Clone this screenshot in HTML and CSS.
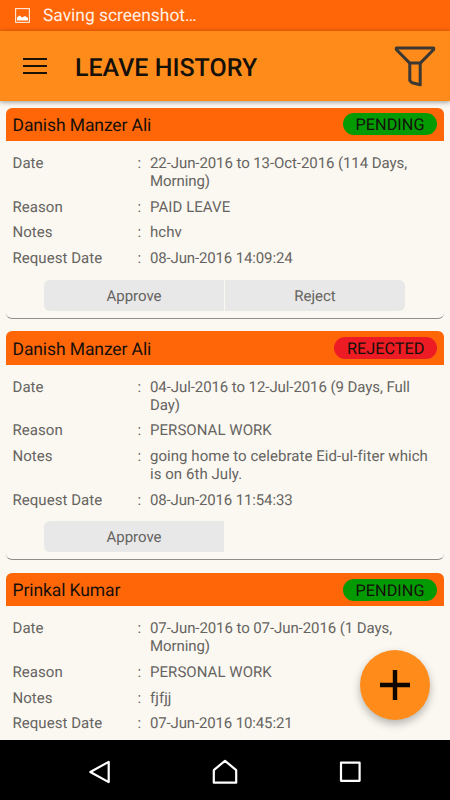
FILE: index.html
```html
<!DOCTYPE html>
<html lang="en">
<head>
    <meta charset="UTF-8">
    <meta name="viewport" content="width=device-width, initial-scale=1.0">
    <title>Leave History</title>
    <link rel="stylesheet" href="styles.css">
</head>
<body>
    <div class="status-bar">
        <svg class="status-icon" width="15" height="15" viewBox="0 0 15 15">
            <rect x="0.6" y="0.6" width="13.8" height="13.8" fill="none" stroke="#ffe9dc" stroke-width="1.1"/>
            <path d="M2 12.5V9.5L4.6 7.6L7 9.6L10 8L13 10V12.5Z" fill="#fff"/>
        </svg>
        <span>Saving screenshot…</span>
    </div>

    <header class="toolbar">
        <svg class="menu-icon" width="24" height="18" viewBox="0 0 24 18">
            <path d="M0 2H24M0 9H24M0 16H24" stroke="#1b1206" stroke-width="2"/>
        </svg>
        <h1>LEAVE HISTORY</h1>
        <svg class="filter-icon" width="42" height="42" viewBox="0 0 42 42" fill="none" stroke="#3b3733" stroke-width="3" stroke-linejoin="round">
            <path d="M2.3 2.9H39.7V4.5L26.5 17.9H15.5L2.3 4.5Z"/>
            <path d="M15.8 17.9V35.5L18 37.8L26.2 39.8V17.9"/>
        </svg>
    </header>

    <main class="list">
        <section class="card">
            <div class="card-head">
                <h2>Danish Manzer Ali</h2>
                <span class="badge pending">PENDING</span>
            </div>
            <dl class="details">
                <dt>Date</dt><dd class="period">22-Jun-2016 to 13-Oct-2016 (114 Days,<br>Morning)</dd>
                <dt>Reason</dt><dd>PAID LEAVE</dd>
                <dt>Notes</dt><dd>hchv</dd>
                <dt>Request Date</dt><dd class="timestamp">08-Jun-2016 14:09:24</dd>
            </dl>
            <div class="actions">
                <button class="btn approve">Approve</button>
                <button class="btn reject">Reject</button>
            </div>
        </section>

        <section class="card">
            <div class="card-head">
                <h2>Danish Manzer Ali</h2>
                <span class="badge rejected">REJECTED</span>
            </div>
            <dl class="details">
                <dt>Date</dt><dd class="period">04-Jul-2016 to 12-Jul-2016 (9 Days, Full<br>Day)</dd>
                <dt>Reason</dt><dd>PERSONAL WORK</dd>
                <dt>Notes</dt><dd>going home to celebrate Eid-ul-fiter which<br>is on 6th July.</dd>
                <dt>Request Date</dt><dd class="timestamp">08-Jun-2016 11:54:33</dd>
            </dl>
            <div class="actions">
                <button class="btn approve">Approve</button>
            </div>
        </section>

        <section class="card">
            <div class="card-head">
                <h2>Prinkal Kumar</h2>
                <span class="badge pending">PENDING</span>
            </div>
            <dl class="details">
                <dt>Date</dt><dd class="period">07-Jun-2016 to 07-Jun-2016 (1 Days,<br>Morning)</dd>
                <dt>Reason</dt><dd>PERSONAL WORK</dd>
                <dt>Notes</dt><dd>fjfjj</dd>
                <dt>Request Date</dt><dd class="timestamp">07-Jun-2016 10:45:21</dd>
            </dl>
        </section>
    </main>

    <!-- Floating add button -->
    <button class="fab" aria-label="Add leave">
        <svg width="30" height="30" viewBox="0 0 30 30">
            <path d="M15 0V30M0 15H30" stroke="#0d0700" stroke-width="4.4"/>
        </svg>
    </button>

    <nav class="nav-bar">
        <svg width="26" height="26" viewBox="0 0 26 26">
            <path d="M21.7 2.9V23.1L3.3 13Z"/>
        </svg>
        <svg width="26" height="26" viewBox="0 0 26 26">
            <path d="M1.8 23.7V11.1L13 1.8L24.2 11.1V23.7Z"/>
        </svg>
        <svg width="26" height="26" viewBox="0 0 26 26">
            <rect x="4" y="3.6" width="18.6" height="18.2"/>
        </svg>
    </nav>
</body>
</html>
```

FILE: styles.css
```css
* {
    box-sizing: border-box;
}
body {
    font-family: Roboto, "Liberation Sans", sans-serif;
    text-rendering: geometricPrecision;
    margin: 0;
    height: 800px;
    display: flex;
    flex-direction: column;
    position: relative;
    overflow: hidden;
    background: #fbf8f1;
    color: #666461;
}
.status-bar {
    flex: none;
    height: 31px;
    padding-left: 15px;
    display: flex;
    align-items: center;
    gap: 13px;
    background: #ff6608;
    color: #fff0e6;
    font-size: 17.4px;
    line-height: 28px;
}
.toolbar {
    flex: none;
    height: 70px;
    padding: 0 14px 0 23px;
    display: flex;
    align-items: center;
    background: #ff8c1a;
    box-shadow: 0 1px 5px rgba(0, 0, 0, 0.4);
    z-index: 1;
}
.toolbar h1 {
    margin: 6px 0 0 28px;
    font-size: 25px;
    font-weight: 500;
    line-height: 28px;
    color: #15100a;
}
.filter-icon {
    margin-left: auto;
}
.list {
    flex: 1;
    min-height: 0;
    overflow: hidden;
    padding: 6.6px 6px 0;
}
.card {
    margin-bottom: 12.8px;
    border-bottom: 1.5px solid #8f8d89;
    border-radius: 6px;
}
.card:last-child {
    padding-bottom: 50px;
}
.card-head {
    height: 33.5px;
    padding: 0 7px 0 6.5px;
    display: flex;
    align-items: center;
    justify-content: space-between;
    background: #ff6608;
    border-radius: 6px 6px 0 0;
    color: #15100a;
}
.card-head h2 {
    margin: 4px 0 0;
    font-size: 17.5px;
    font-weight: 400;
    line-height: 21px;
    letter-spacing: -0.1px;
}
.badge {
    height: 22px;
    padding: 0 12.5px;
    border-radius: 11px;
    font-size: 16.3px;
    line-height: 23px;
}
.pending {
    background: #049a04;
}
.rejected {
    background: #ed1c24;
}
.details {
    margin: 0;
    padding: 14.1px 0 0 6.5px;
    display: grid;
    grid-template-columns: 125px 1fr;
    row-gap: 8.2px;
    font-size: 15px;
    line-height: 17.6px;
    letter-spacing: 0.05px;
}
.details dd {
    margin: 0;
    display: block;
    position: relative;
    padding-left: 12.5px;
    white-space: nowrap;
}
/* colon column between label and value */
.details dd::before {
    content: ":";
    position: absolute;
    left: 0;
}
.details .period {
    letter-spacing: -0.08px;
}
.details .timestamp {
    letter-spacing: -0.14px;
}
.actions {
    display: flex;
    gap: 1px;
    padding: 12.2px 38px 6.5px;
}
.btn {
    width: 180px;
    height: 31.2px;
    padding: 1px 0 0;
    border: none;
    background: #e8e8e8;
    color: #666461;
    font-family: inherit;
    font-size: 15px;
    text-rendering: inherit;
}
.approve {
    border-radius: 6px 0 0 6px;
}
.reject {
    border-radius: 0 6px 6px 0;
}
.fab {
    position: absolute;
    left: 360px;
    top: 650px;
    width: 70px;
    height: 70px;
    padding: 0;
    display: flex;
    align-items: center;
    justify-content: center;
    border: none;
    border-radius: 50%;
    background: #ff8c1a;
    box-shadow: 0 4px 8px rgba(0, 0, 0, 0.28);
}
.nav-bar {
    flex: none;
    height: 60px;
    padding: 4px 87px 0 87px;
    display: flex;
    align-items: center;
    justify-content: space-between;
    background: #000;
}
.nav-bar svg {
    fill: none;
    stroke: #fff;
    stroke-width: 2.2;
    stroke-linejoin: round;
}
```
